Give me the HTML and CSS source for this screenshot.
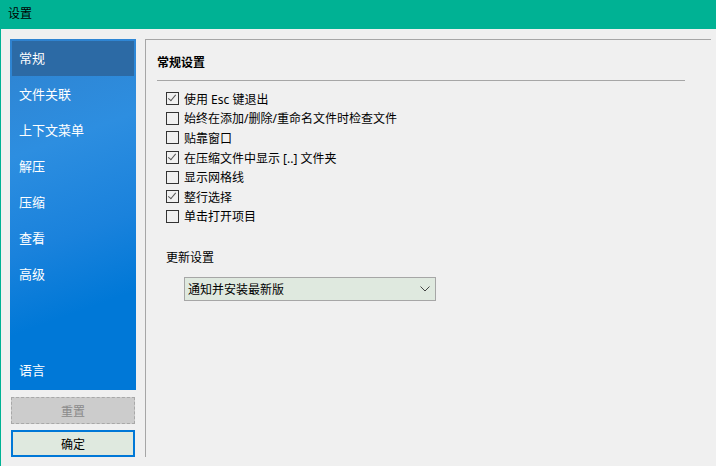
FILE: index.html
```html
<!DOCTYPE html>
<html>
<head>
	<meta charset="utf-8">
	<title>设置</title>
	<link rel="stylesheet" href="styles.css">
</head>
<body>
<div class="win">
	<div class="titlebar">设置</div>
	<div class="main">
		<div class="side">
			<ul class="nav">
				<li class="on">常规</li>
				<li>文件关联</li>
				<li>上下文菜单</li>
				<li>解压</li>
				<li>压缩</li>
				<li>查看</li>
				<li>高级</li>
				<li class="lang">语言</li>
			</ul>
			<button class="btn reset">重置</button>
			<button class="btn ok">确定</button>
		</div>
		<div class="panel">
			<h1>常规设置</h1>
			<div class="opts">
				<label class="opt checked"><span class="box"></span>使用 Esc 键退出</label>
				<label class="opt"><span class="box"></span>始终在添加/删除/重命名文件时检查文件</label>
				<label class="opt"><span class="box"></span>贴靠窗口</label>
				<label class="opt checked"><span class="box"></span>在压缩文件中显示 [..] 文件夹</label>
				<label class="opt"><span class="box"></span>显示网格线</label>
				<label class="opt checked"><span class="box"></span>整行选择</label>
				<label class="opt"><span class="box"></span>单击打开项目</label>
			</div>
			<div class="upd">更新设置</div>
			<div class="select">
				<span>通知并安装最新版</span>
				<svg width="10" height="6" viewBox="0 0 10 6"><path d="M0.5 0.5 L5 5 L9.5 0.5" fill="none" stroke="#444" stroke-width="1"/></svg>
			</div>
		</div>
	</div>
</div>
</body>
</html>
```

FILE: styles.css
```css
body{margin:0;background:#f0f0f0;font-family:"Noto Sans","Noto Sans CJK SC",sans-serif;font-size:12px;color:#000;}
.win{width:716px;height:466px;border-left:1px solid #00b294;box-sizing:border-box;display:flex;flex-direction:column;}
.titlebar{height:29px;line-height:27px;background:#00b294;padding-left:8px;font-size:12px;margin-left:-1px;}
.main{display:flex;padding:10px 0 0 9px;flex:1;}

.side{width:126px;display:flex;flex-direction:column;}
.nav{list-style:none;margin:0;padding:2px;height:351px;box-sizing:border-box;
	background:linear-gradient(160deg,#2f82cf 0%,#2d8ee0 30%,#1a82dc 55%,#0078d7 75%,#0078d7 100%);
	display:flex;flex-direction:column;}
.nav li{height:35px;line-height:34px;padding-left:7px;color:#fff;font-size:13px;flex:none;margin-bottom:1px;}
.nav li.on{background:#2c6aa5;}
.nav li.lang{margin-top:auto;margin-bottom:0;line-height:41px;height:38px;}

.btn{font-family:inherit;font-size:12px;width:124px;margin-left:1px;box-sizing:border-box;padding:0;}
.reset{margin-top:7px;height:27px;background:#cccccc;border:1px dashed #a8a8a8;color:#8a8a8a;}
.ok{margin-top:6px;height:27px;background:#dfe9df;border:2px solid #0078d7;color:#000;}

.panel{margin-left:9px;width:566px;height:418px;border-left:1px solid #a6a6a6;border-top:1px solid #a6a6a6;box-sizing:border-box;padding:0 26px 0 11px;}
.panel h1{font-size:12px;font-weight:bold;margin:13px 0 0;height:20px;line-height:20px;}
.panel h1{border-bottom:1px solid #a6a6a6;padding-bottom:7px;}

.opts{padding:8px 0 0 9px;display:flex;flex-direction:column;}
.opt{display:flex;align-items:center;height:19.6px;}
.box{width:11px;height:11px;border:1px solid #333;margin-right:5px;position:relative;flex:none;}
.checked .box::after{content:"";position:absolute;left:3px;top:0px;width:3px;height:7px;border-right:1px solid #555;border-bottom:1px solid #555;transform:rotate(40deg);}

.upd{margin:22px 0 0 9px;line-height:20px;}
.select{margin:9px 0 0 27px;width:252px;height:24px;box-sizing:border-box;border:1px solid #a6a6a6;background:#dfe9df;
	display:flex;align-items:center;justify-content:space-between;padding:0 5px 0 3px;}
```
